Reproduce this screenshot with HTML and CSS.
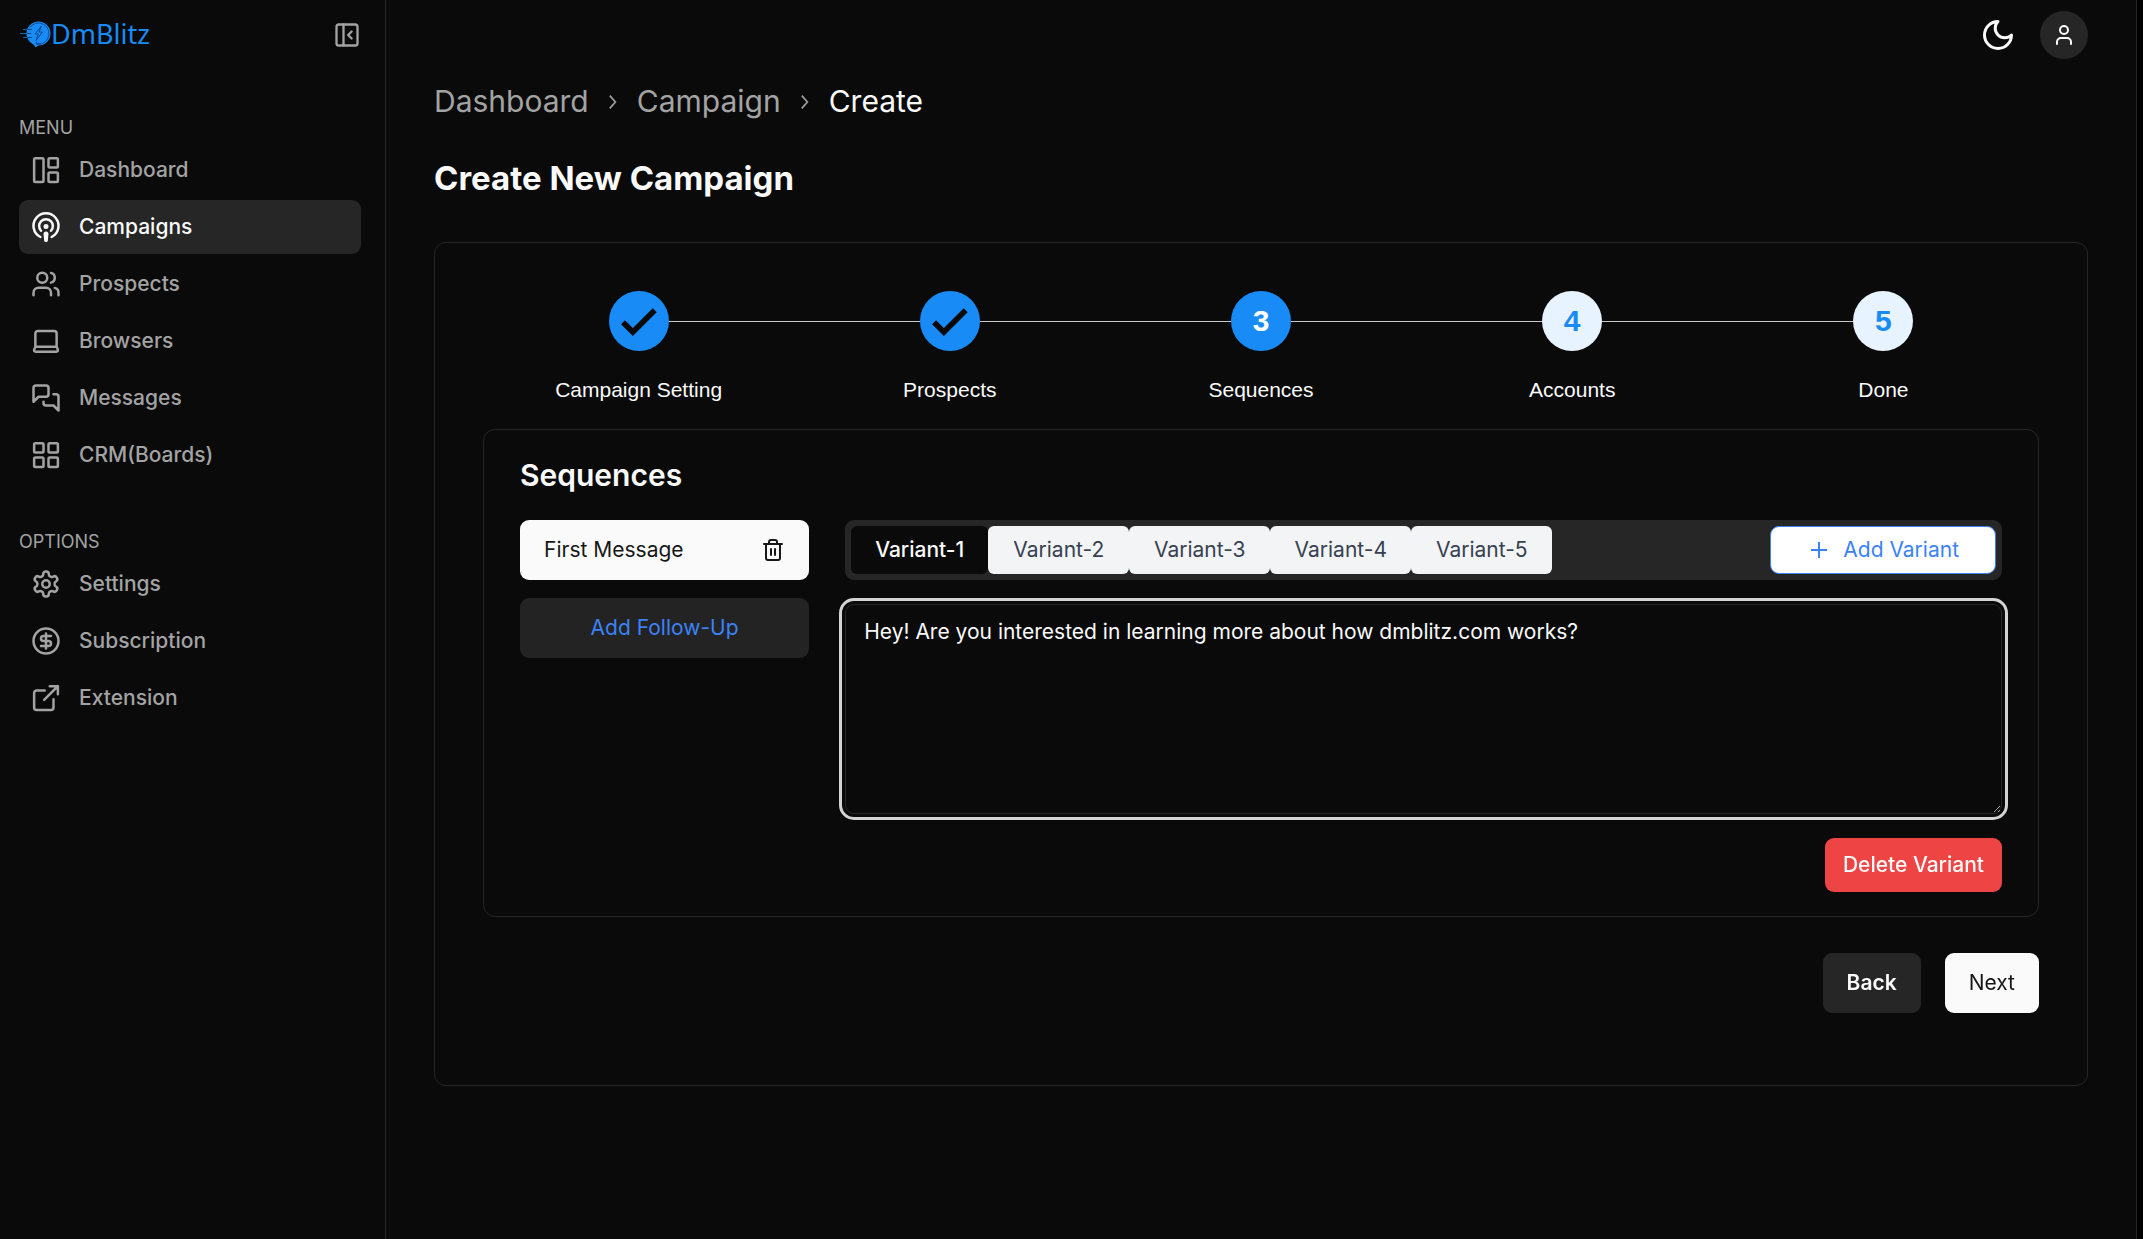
FILE: index.html
```html
<!DOCTYPE html>
<html lang="en">
<head>
    <meta charset="UTF-8">
    <meta name="viewport" content="width=device-width, initial-scale=1.0">
    <title>DmBlitz - Create Campaign</title>
    <link rel="stylesheet" href="styles.css">
</head>
<body>
    <div class="app">
        <aside class="sidebar">
            <div class="sidebar-top">
                <a class="logo" href="#">
                    <svg class="logo-mark" viewBox="0 0 32 28">
                        <circle cx="19.500" cy="13.500" r="12" fill="currentColor"/>
                        <path d="M14 23.500l4-1 4 1-5.500 4z" fill="currentColor"/>
                        <path d="M4 9.500h5M1 13.500h7M4 17.500h5" fill="none" stroke="currentColor" opacity="0.700"/>
                        <circle cx="19.500" cy="13.500" r="10.500" fill="none" stroke="#0a3f7a" stroke-width="0.700" stroke-dasharray="46 20" transform="rotate(-150 19.500 13.500)"/>
                        <path d="M8 9.500h5M8 13.500h4M8 17.500h5M22.500 6l-6.500 8h3.500l-2.500 6.500 6.500-8.500h-3.500zM18 21.500l-1 2.500h5" fill="none" stroke="#0a3f7a" stroke-width="0.900"/>
                    </svg>
                    <span>DmBlitz</span>
                </a>
                <button class="collapse" aria-label="Collapse sidebar">
                    <svg class="icon" viewBox="0 0 24 24"><rect x="3" y="3" width="18" height="18" rx="2"/><path d="M9 3v18M16 15l-3-3 3-3"/></svg>
                </button>
            </div>

            <nav>
                <h2 class="nav-label">MENU</h2>
                <ul class="nav-list">
                    <li><a href="#"><svg class="icon" viewBox="0 0 24 24"><rect x="2.500" y="2.500" width="7.500" height="19" rx="1"/><rect x="14" y="2.500" width="7.500" height="7.500" rx="1"/><rect x="14" y="14" width="7.500" height="7.500" rx="1"/></svg>Dashboard</a></li>
                    <li><a href="#" class="active"><svg class="icon" viewBox="0 0 24 24"><path d="M16.500 20a10 10 0 1 0-9 0M8 15a5.500 5.500 0 1 1 8 0"/><circle cx="12" cy="11.500" r="1" fill="currentColor"/><path fill="currentColor" d="M13 17.500a1 1 0 1 0-2 0l.5 5a.5.5 0 1 0 1 0Z"/></svg>Campaigns</a></li>
                    <li><a href="#"><svg class="icon" viewBox="0 0 24 24"><path d="M16 21v-2a4 4 0 0 0-4-4H6a4 4 0 0 0-4 4v2"/><circle cx="9" cy="7" r="4"/><path d="M22 21v-2a4 4 0 0 0-3-3.870M16 3.130a4 4 0 0 1 0 7.750"/></svg>Prospects</a></li>
                    <li><a href="#"><svg class="icon" viewBox="0 0 24 24"><path d="M3.500 16.500V6a2 2 0 0 1 2-2h13a2 2 0 0 1 2 2v10.500M3.500 16.500h17l1 2.500a1.200 1.200 0 0 1-1 1.500h-17a1.200 1.200 0 0 1-1-1.500z"/></svg>Browsers</a></li>
                    <li><a href="#"><svg class="icon" viewBox="0 0 24 24"><path d="M14 9a2 2 0 0 1-2 2H6l-4 4V4c0-1.100.9-2 2-2h8a2 2 0 0 1 2 2zM18 9h2a2 2 0 0 1 2 2v11l-4-4h-6a2 2 0 0 1-2-2v-1"/></svg>Messages</a></li>
                    <li><a href="#"><svg class="icon" viewBox="0 0 24 24"><rect x="2.500" y="2.500" width="7.500" height="7.500" rx="1"/><rect x="14" y="2.500" width="7.500" height="7.500" rx="1"/><rect x="14" y="14" width="7.500" height="7.500" rx="1"/><rect x="2.500" y="14" width="7.500" height="7.500" rx="1"/></svg>CRM(Boards)</a></li>
                </ul>

                <h2 class="nav-label">OPTIONS</h2>
                <ul class="nav-list">
                    <li><a href="#"><svg class="icon" viewBox="0 0 24 24"><path d="M12.220 2h-.44a2 2 0 0 0-2 2v.18a2 2 0 0 1-1 1.730l-.43.25a2 2 0 0 1-2 0l-.15-.08a2 2 0 0 0-2.730.73l-.22.38a2 2 0 0 0 .73 2.730l.15.1a2 2 0 0 1 1 1.720v.51a2 2 0 0 1-1 1.740l-.15.09a2 2 0 0 0-.73 2.730l.22.38a2 2 0 0 0 2.730.73l.15-.08a2 2 0 0 1 2 0l.43.25a2 2 0 0 1 1 1.730V20a2 2 0 0 0 2 2h.44a2 2 0 0 0 2-2v-.18a2 2 0 0 1 1-1.730l.43-.25a2 2 0 0 1 2 0l.15.08a2 2 0 0 0 2.730-.73l.22-.39a2 2 0 0 0-.73-2.730l-.15-.08a2 2 0 0 1-1-1.740v-.5a2 2 0 0 1 1-1.740l.15-.09a2 2 0 0 0 .73-2.730l-.22-.38a2 2 0 0 0-2.730-.73l-.15.08a2 2 0 0 1-2 0l-.43-.25a2 2 0 0 1-1-1.730V4a2 2 0 0 0-2-2z"/><circle cx="12" cy="12" r="3"/></svg>Settings</a></li>
                    <li><a href="#"><svg class="icon" viewBox="0 0 24 24"><circle cx="12" cy="12" r="10"/><path d="M16 8h-6a2 2 0 1 0 0 4h4a2 2 0 1 1 0 4H8M12 18V6"/></svg>Subscription</a></li>
                    <li><a href="#"><svg class="icon" viewBox="0 0 24 24"><path d="M15 2.500h6.500V9M10.500 13.500l11-11M18 13v6.500a2 2 0 0 1-2 2H4.500a2 2 0 0 1-2-2V8a2 2 0 0 1 2-2H11"/></svg>Extension</a></li>
                </ul>
            </nav>
        </aside>

        <div class="content">
            <header class="topbar">
                <button class="theme" aria-label="Toggle theme">
                    <svg class="icon" viewBox="0 0 24 24"><path d="M12 3a6 6 0 0 0 9 9 9 9 0 1 1-9-9Z"/></svg>
                </button>
                <button class="avatar" aria-label="Account">
                    <svg class="icon" viewBox="0 0 24 24"><path d="M19 21v-2a4 4 0 0 0-4-4H9a4 4 0 0 0-4 4v2"/><circle cx="12" cy="7" r="4"/></svg>
                </button>
            </header>

            <main>
                <nav class="breadcrumb" aria-label="Breadcrumb">
                    <a href="#">Dashboard</a>
                    <svg viewBox="0 0 15 15"><path d="M5.500 3.500 9 7.500l-3.500 4"/></svg>
                    <a href="#">Campaign</a>
                    <svg viewBox="0 0 15 15"><path d="M5.500 3.500 9 7.500l-3.500 4"/></svg>
                    <span>Create</span>
                </nav>
                <h1>Create New Campaign</h1>

                <section class="card">
                    <ol class="steps">
                        <li class="done">
                            <span class="dot"><svg viewBox="0 0 24 24"><path d="M9 16.170 4.830 12l-1.420 1.410L9 19 21 7l-1.410-1.410z"/></svg></span>
                            Campaign Setting
                        </li>
                        <li class="done">
                            <span class="dot"><svg viewBox="0 0 24 24"><path d="M9 16.170 4.830 12l-1.420 1.410L9 19 21 7l-1.410-1.410z"/></svg></span>
                            Prospects
                        </li>
                        <li class="current"><span class="dot">3</span>Sequences</li>
                        <li><span class="dot">4</span>Accounts</li>
                        <li><span class="dot">5</span>Done</li>
                    </ol>

                    <section class="panel">
                        <h2>Sequences</h2>
                        <div class="sequence-grid">
                            <div class="messages">
                                <div class="message">
                                    <span>First Message</span>
                                    <button aria-label="Delete message">
                                        <svg class="icon" viewBox="0 0 24 24"><path d="M3 6h18M19 6v14a2 2 0 0 1-2 2H7a2 2 0 0 1-2-2V6M8 6V4a2 2 0 0 1 2-2h4a2 2 0 0 1 2 2v2M10 11v6M14 11v6"/></svg>
                                    </button>
                                </div>
                                <button class="follow-up">Add Follow-Up</button>
                            </div>

                            <div class="editor">
                                <div class="variants">
                                    <button class="variant selected">Variant-1</button>
                                    <button class="variant">Variant-2</button>
                                    <button class="variant">Variant-3</button>
                                    <button class="variant">Variant-4</button>
                                    <button class="variant">Variant-5</button>
                                    <button class="add-variant">
                                        <svg viewBox="0 0 24 24"><path d="M4 12h16M12 4v16"/></svg>
                                        Add Variant
                                    </button>
                                </div>
                                <textarea id="message" aria-label="Message" spellcheck="false">Hey! Are you interested in learning more about how dmblitz.com works?</textarea>
                                <button class="delete-variant">Delete Variant</button>
                            </div>
                        </div>
                    </section>

                    <div class="actions">
                        <button class="back">Back</button>
                        <button class="next">Next</button>
                    </div>
                </section>
            </main>
        </div>
    </div>

    <script>
        // put the caret after the text
        const message = document.getElementById("message");
        message.focus();
        message.setSelectionRange(message.value.length, message.value.length);
    </script>
</body>
</html>
```

FILE: styles.css
```css
* {
    box-sizing: border-box;
}

body {
    margin: 0;
    padding-right: 6px;
    background-color: #000;
    color: #fafafa;
    font-family: Inter, "Liberation Sans", sans-serif;
    font-size: 21px;
    line-height: 30px;
}

h1, h2, ul, ol {
    margin: 0;
    padding: 0;
}

ul, ol {
    list-style: none;
}

a {
    color: inherit;
    text-decoration: none;
}

button {
    padding: 0;
    border: 0;
    background: none;
    color: inherit;
    font: inherit;
    cursor: pointer;
}

.icon {
    display: block;
    width: 30px;
    height: 30px;
    flex-shrink: 0;
    fill: none;
    stroke: currentColor;
    stroke-width: 2;
    stroke-linecap: round;
    stroke-linejoin: round;
}

.app {
    display: flex;
    min-height: 100vh;
    background-color: #0a0a0a;
    border-right: 1px solid #262626;
}

/* sidebar */
.sidebar {
    width: 386px;
    flex-shrink: 0;
    padding: 0 24px 0 19px;
    border-right: 1px solid #262626;
    color: #a3a3a3;
}

.sidebar-top {
    display: flex;
    align-items: center;
    justify-content: space-between;
    height: 70px;
    margin-bottom: 43px;
}

.logo {
    display: flex;
    align-items: center;
    padding-bottom: 3px;
    color: #188bf6;
    font-family: "Noto Sans", sans-serif;
    font-size: 27px;
}

.logo-mark {
    width: 32px;
    height: 28px;
}

.collapse .icon {
    width: 28px;
    height: 28px;
}

.nav-label {
    font-size: 18px;
    font-weight: 400;
}

.nav-list {
    display: flex;
    flex-direction: column;
    gap: 3px;
    margin-bottom: 45px;
}

.nav-list a {
    display: flex;
    align-items: center;
    gap: 18px;
    padding: 12px;
    border-radius: 9px;
    font-weight: 500;
}

.nav-list .active {
    background-color: #262626;
    color: #fafafa;
}

/* main column */
.content {
    flex: 1;
    min-width: 0;
    padding: 0 48px;
}

.topbar {
    display: flex;
    align-items: center;
    justify-content: flex-end;
    gap: 24px;
    height: 70px;
}

.theme .icon {
    width: 36px;
    height: 36px;
}

.avatar {
    display: flex;
    align-items: center;
    justify-content: center;
    width: 48px;
    height: 48px;
    border-radius: 50%;
    background-color: #262626;
}

.avatar .icon {
    width: 24px;
    height: 24px;
}

.breadcrumb {
    display: flex;
    align-items: center;
    gap: 12px;
    margin-top: 9px;
    color: #a3a3a3;
    font-size: 30px;
    line-height: 45px;
}

.breadcrumb svg {
    width: 24px;
    height: 24px;
    fill: none;
    stroke: currentColor;
}

.breadcrumb span {
    color: #fafafa;
}

h1 {
    margin: 27px 0 37px;
    font-size: 33px;
    font-weight: 700;
    line-height: 54px;
}

.card {
    padding: 48px 48px 72px;
    border: 1px solid #262626;
    border-radius: 12px;
}

/* stepper */
.steps {
    display: flex;
    margin-bottom: 24px;
    font-family: "Liberation Sans", Arial, sans-serif;
}

.steps li {
    position: relative;
    display: flex;
    flex: 1;
    flex-direction: column;
    align-items: center;
    gap: 24px;
}

.steps li + li::before {
    content: "";
    position: absolute;
    top: 30px;
    left: calc(30px - 50%);
    right: calc(30px + 50%);
    border-top: 1px solid #c8c8c8;
}

.dot {
    display: flex;
    align-items: center;
    justify-content: center;
    width: 60px;
    height: 60px;
    border-radius: 50%;
    background-color: #e7f3fe;
    color: #188bf6;
    font-size: 30px;
    font-weight: 700;
}

.dot svg {
    width: 45px;
    height: 45px;
    fill: #0a0a0a;
    stroke: #0a0a0a;
    stroke-width: 1;
}

.done .dot, .current .dot {
    background-color: #188bf6;
    color: #fff;
}

/* sequences */
.panel {
    padding: 24px 36px;
    border: 1px solid #262626;
    border-radius: 12px;
}

.panel h2 {
    margin-bottom: 24px;
    font-size: 30px;
    font-weight: 600;
    line-height: 42px;
}

.sequence-grid {
    display: grid;
    grid-template-columns: 1fr 4fr;
    gap: 36px;
}

.messages {
    display: flex;
    flex-direction: column;
    gap: 18px;
}

.message {
    display: flex;
    align-items: center;
    justify-content: space-between;
    height: 60px;
    padding: 0 24px;
    border-radius: 9px;
    background-color: #fafafa;
    color: #171717;
}

.message .icon {
    width: 24px;
    height: 24px;
}

.follow-up {
    height: 60px;
    border-radius: 9px;
    background-color: #232323;
    color: #3b82f6;
}

.editor {
    display: flex;
    flex-direction: column;
    gap: 24px;
}

.variants {
    display: flex;
    padding: 6px;
    border-radius: 9px;
    background-color: #262626;
}

.variant {
    min-width: 141px;
    height: 48px;
    padding: 0 24px;
    border-radius: 6px;
    background-color: #f3f4f6;
    color: #374151;
}

.variant.selected {
    min-width: 0;
    background-color: #0a0a0a;
    color: #fafafa;
    font-weight: 500;
}

.add-variant {
    display: flex;
    align-items: center;
    gap: 12px;
    height: 48px;
    margin-left: auto;
    padding: 0 36px;
    border: 1px solid #3b82f6;
    border-radius: 9px;
    background-color: #fff;
    color: #3b82f6;
}

.add-variant svg {
    width: 24px;
    height: 24px;
    stroke: currentColor;
    stroke-width: 2;
}

textarea {
    display: block;
    width: 100%;
    height: 210px;
    padding: 12px 18px;
    border: 1px solid #262626;
    border-radius: 9px;
    outline: 3px solid #d4d4d4;
    outline-offset: 3px;
    background-color: transparent;
    color: #fafafa;
    font: inherit;
}

.delete-variant {
    align-self: flex-end;
    height: 54px;
    padding: 0 18px;
    border-radius: 9px;
    background-color: #ef4444;
    color: #fafafa;
    font-weight: 500;
}

.actions {
    display: flex;
    justify-content: flex-end;
    gap: 24px;
    margin-top: 36px;
}

.actions button {
    height: 60px;
    padding: 0 24px;
    border-radius: 9px;
}

.back {
    background-color: #262626;
    font-weight: 600;
}

.actions .next {
    background-color: #fafafa;
    color: #171717;
}
```
